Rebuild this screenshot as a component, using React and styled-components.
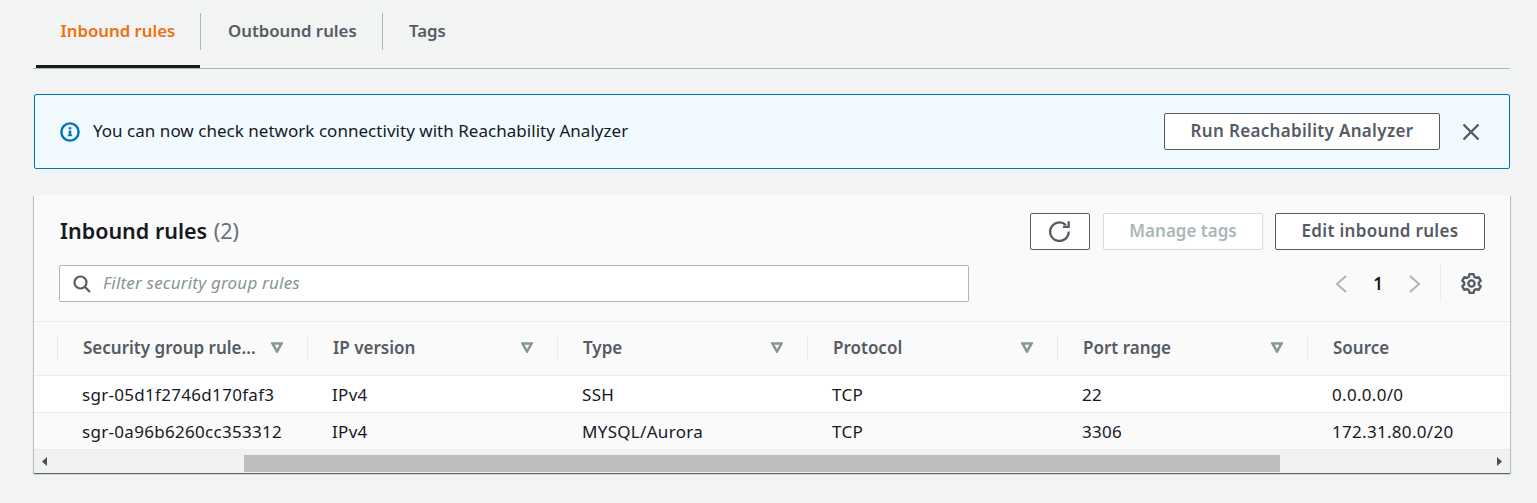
import React from "react";
import styled, { createGlobalStyle } from "styled-components";

const GlobalStyle = createGlobalStyle`
  body {
    margin: 0;
    background: #f2f3f3;
    font-family: "Noto Sans", "Liberation Sans", sans-serif;
    color: #16191f;
  }
`;

const Page = styled.div`
  width: 1537px;
  height: 503px;
  box-sizing: border-box;
  padding: 0 27px 0 33px;
  overflow: hidden;
`;

const TabBar = styled.div`
  display: flex;
  height: 68px;
  padding: 0 0 0 3px;
  border-bottom: 1px solid #aab7b8;
`;

const Tab = styled.div`
  display: flex;
  align-items: center;
  box-sizing: border-box;
  height: 68px;
  width: ${(p) => p.$width}px;
  padding: 0 0 5px ${(p) => p.$pad}px;
  font-size: 16.8px;
  font-weight: 600;
  position: relative;
  color: ${(p) => (p.$active ? "#ec7211" : "#545b64")};
  border-bottom: 3px solid ${(p) => (p.$active ? "#16191f" : "transparent")};

  &::after {
    content: "";
    display: ${(p) => (p.$last ? "none" : "block")};
    position: absolute;
    right: -1px;
    top: 13px;
    height: 37px;
    width: 1px;
    background: #aab7b8;
  }
`;

const Alert = styled.div`
  display: flex;
  align-items: center;
  box-sizing: border-box;
  height: 75px;
  margin: 25px 0 26px 1px;
  padding: 0 28px 0 25px;
  background: #f1faff;
  border: 1px solid #0073bb;
  border-radius: 2px;
`;

const AlertText = styled.div`
  flex: 1;
  margin: -2px 0 0 13px;
  font-size: 17px;
  letter-spacing: 0.03px;
`;

const Button = styled.div`
  display: flex;
  align-items: center;
  justify-content: center;
  box-sizing: border-box;
  height: 37px;
  width: ${(p) => p.$width}px;
  margin-right: ${(p) => p.$gap || 0}px;
  padding-bottom: 2px;
  font-size: 17px;
  font-weight: 600;
  letter-spacing: ${(p) => (p.$disabled ? "0" : "0.32px")};
  color: ${(p) => (p.$disabled ? "#aab7b8" : "#545b64")};
  background: #fff;
  border: 1px solid ${(p) => (p.$disabled ? "#d5dbdb" : "#545b64")};
  border-radius: 2px;
`;

const CloseButton = styled.div`
  display: flex;
  margin-left: 21px;
`;

const Panel = styled.div`
  margin-left: 1px;
  background: #fafafa;
  box-shadow: 0 1px 1px 0 rgba(0, 28, 36, 0.5), 1px 1px 1px 0 rgba(0, 28, 36, 0.15),
    -1px 1px 1px 0 rgba(0, 28, 36, 0.15);
  overflow: hidden;
`;

const PanelHeader = styled.div`
  box-sizing: border-box;
  height: 127px;
  padding: 18px 25px 0 25px;
  border-bottom: 1px solid #eaeded;
`;

const TopRow = styled.div`
  display: flex;
  align-items: center;
  height: 37px;
`;

const Title = styled.h2`
  flex: 1;
  margin: -2px 0 0;
  padding-left: 1px;
  font-size: 21.5px;
  font-weight: 600;
`;

const Count = styled.span`
  margin-left: 1px;
  font-weight: 400;
  color: #687078;
`;

const Actions = styled.div`
  display: flex;
  gap: 12px;
`;

const FilterRow = styled.div`
  display: flex;
  align-items: center;
  margin-top: 15px;
`;

const FilterInput = styled.div`
  display: flex;
  align-items: center;
  box-sizing: border-box;
  width: 910px;
  height: 37px;
  padding-left: 13px;
  background: #fff;
  border: 1px solid #aab7b8;
  border-radius: 2px;
`;

const Placeholder = styled.span`
  margin: -2px 0 0 12px;
  font-size: 17px;
  font-style: italic;
  letter-spacing: 0.2px;
  color: #879596;
`;

const Pager = styled.div`
  display: flex;
  align-items: center;
  height: 37px;
  margin-left: auto;
  margin-right: 3px;
`;

const PageNumber = styled.span`
  width: 60px;
  text-align: center;
  font-size: 17px;
  font-weight: 600;
`;

const PagerDivider = styled.div`
  width: 1px;
  height: 37px;
  margin: 0 20px 0 18px;
  background: #eaeded;
`;

const Row = styled.div`
  display: grid;
  grid-template-columns: 23px repeat(5, 250px) 1fr;
  box-sizing: border-box;
  height: ${(p) => p.$height}px;
  background: ${(p) => p.$bg};
  border-bottom: 1px solid #eaeded;
`;

const HeadCell = styled.div`
  display: flex;
  align-items: center;
  justify-content: space-between;
  grid-column: ${(p) => p.$col};
  height: 25px;
  margin-top: 14px;
  padding: 0 24px 2px 25px;
  box-sizing: border-box;
  border-left: 1px solid #eaeded;
  font-size: 17px;
  font-weight: 600;
  color: #545b64;
`;

const Cell = styled.div`
  display: flex;
  align-items: center;
  grid-column: ${(p) => p.$col};
  padding-left: 25px;
  font-size: 17px;
  letter-spacing: 0.3px;
`;

const ScrollBar = styled.div`
  display: flex;
  align-items: center;
  height: 23px;
  background: #f1f1f1;
`;

const ScrollArrow = styled.div`
  display: flex;
  justify-content: center;
  width: 20px;
  margin: ${(p) => (p.$right ? "0 0 0 auto" : "0")};
`;

const ScrollThumb = styled.div`
  width: 1036px;
  height: 17px;
  margin-top: 3px;
  margin-left: 190px;
  background: #bdbdbd;
`;

const columns = [
  "Security group rule...",
  "IP version",
  "Type",
  "Protocol",
  "Port range",
  "Source",
];

const rows = [
  ["sgr-05d1f2746d170faf3", "IPv4", "SSH", "TCP", "22", "0.0.0.0/0"],
  ["sgr-0a96b6260cc353312", "IPv4", "MYSQL/Aurora", "TCP", "3306", "172.31.80.0/20"],
];

const InfoIcon = () => (
  <svg width="20" height="20" viewBox="0 0 20 20" fill="none">
    <circle cx="10" cy="10" r="8.6" stroke="#0073bb" strokeWidth="2.4" />
    <rect x="8.7" y="8.6" width="2.6" height="5" fill="#0073bb" />
    <rect x="8.7" y="5.2" width="2.6" height="2.2" fill="#0073bb" />
    <rect x="7.8" y="12.8" width="4.4" height="1.4" fill="#0073bb" />
  </svg>
);

const CloseIcon = () => (
  <svg width="20" height="20" viewBox="0 0 20 20" fill="none" stroke="#545b64" strokeWidth="2.4">
    <path d="M2.5 2.5l15 15M17.500 2.500l-15 15" />
  </svg>
);

const RefreshIcon = () => (
  <svg width="22" height="22" viewBox="1 0 19 19" fill="none" stroke="#545b64" strokeWidth="2">
    <path d="M15.600 4.400A8 8 0 1 0 18 10" />
    <path d="M18 1v5h-5" />
  </svg>
);

const SearchIcon = () => (
  <svg width="18" height="18" viewBox="0 0 18 18" fill="none" stroke="#545b64" strokeWidth="2.2">
    <circle cx="7.500" cy="7.500" r="6" />
    <path d="M12 12l5 5" />
  </svg>
);

const Chevron = ({ left }) => (
  <svg width="14" height="20" viewBox="0 0 14 20" fill="none" stroke="#aab7b8" strokeWidth="2">
    <path d={left ? "M12 2L3 10l9 8" : "M2 2l9 8-9 8"} />
  </svg>
);

const GearIcon = () => (
  <svg width="21" height="21" viewBox="1 1 18 18" fill="none" stroke="#545b64" strokeWidth="2" strokeLinejoin="round">
    <path d="M8.200 2h3.600l.5 2.300 1.600.9 2.200-.7 1.800 3.100-1.700 1.600v1.600l1.700 1.600-1.800 3.100-2.200-.7-1.600.9-.5 2.300H8.200l-.5-2.300-1.600-.9-2.200.7-1.800-3.100L3.800 10.800V9.200L2.100 7.600l1.800-3.100 2.200.7 1.600-.9z" />
    <circle cx="10" cy="10" r="2.700" />
  </svg>
);

const SortIcon = () => (
  <svg width="12" height="11" viewBox="0 0 12 11" fill="none" stroke="#879596" strokeWidth="2.500">
    <path d="M1.500 1.500h9L6 9.500z" />
  </svg>
);

const ArrowIcon = ({ right }) => (
  <svg width="6" height="9" viewBox="0 0 6 9" fill="#505050">
    <path d={right ? "M0 0l5 4.500L0 9z" : "M6 0L1 4.500 6 9z"} />
  </svg>
);

const App = () => (
  <Page>
    <GlobalStyle />
    <TabBar>
      <Tab $active $width={164} $pad={24.5}>Inbound rules</Tab>
      <Tab $width={182} $pad={28}>Outbound rules</Tab>
      <Tab $last $width={100} $pad={27}>Tags</Tab>
    </TabBar>

    <Alert>
      <InfoIcon />
      <AlertText>You can now check network connectivity with Reachability Analyzer</AlertText>
      <Button $width={276}>Run Reachability Analyzer</Button>
      <CloseButton><CloseIcon /></CloseButton>
    </Alert>

    <Panel>
      <PanelHeader>
        <TopRow>
          <Title>Inbound rules <Count>(2)</Count></Title>
          <Actions>
            <Button $width={60} $gap={1}><RefreshIcon /></Button>
            <Button $width={160} $disabled>Manage tags</Button>
            <Button $width={210}>Edit inbound rules</Button>
          </Actions>
        </TopRow>
        <FilterRow>
          <FilterInput>
            <SearchIcon />
            <Placeholder>Filter security group rules</Placeholder>
          </FilterInput>
          <Pager>
            <Chevron left />
            <PageNumber>1</PageNumber>
            <Chevron />
            <PagerDivider />
            <GearIcon />
          </Pager>
        </FilterRow>
      </PanelHeader>

      <Row $height={54} $bg="#fafafa">
        {columns.map((name, i) => (
          <HeadCell key={name} $col={i + 2}>
            {name}
            {i < 5 && <SortIcon />}
          </HeadCell>
        ))}
      </Row>
      {rows.map((row, r) => (
        <Row key={row[0]} $height={37} $bg={r === 0 ? "#fff" : "#fafafa"}>
          {row.map((value, i) => (
            <Cell key={i} $col={i + 2}>{value}</Cell>
          ))}
        </Row>
      ))}

      <ScrollBar>
        <ScrollArrow><ArrowIcon /></ScrollArrow>
        <ScrollThumb />
        <ScrollArrow $right><ArrowIcon right /></ScrollArrow>
      </ScrollBar>
    </Panel>
  </Page>
);

export default App;
